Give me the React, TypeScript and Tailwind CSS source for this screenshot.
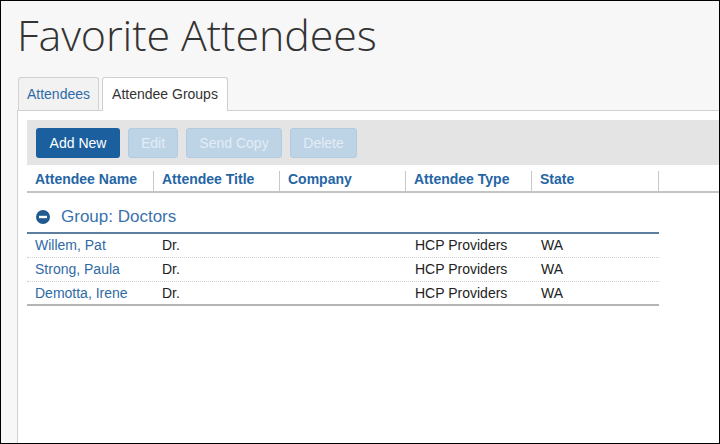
const ROWS = [
  { name: "Willem, Pat", title: "Dr.", company: "", type: "HCP Providers", state: "WA" },
  { name: "Strong, Paula", title: "Dr.", company: "", type: "HCP Providers", state: "WA" },
  { name: "Demotta, Irene", title: "Dr.", company: "", type: "HCP Providers", state: "WA" },
];

const COLUMNS = [
  { label: "Attendee Name", w: "w-[127px]" },
  { label: "Attendee Title", w: "w-[126px]" },
  { label: "Company", w: "w-[126px]" },
  { label: "Attendee Type", w: "w-[126px]" },
  { label: "State", w: "w-[127px]" },
];

export default function App() {
  return (
    <div className="w-[720px] h-[444px] border border-black bg-[#f7f7f7] overflow-hidden flex flex-col font-['Liberation_Sans',Arial,sans-serif] text-[14px]">
      {/* title */}
      <h1 className="pl-[16px] pt-[8px] h-[76px] font-['Open_Sans',sans-serif] font-light text-[43px] leading-[52px] text-[#333] tracking-[-0.1px]">
        Favorite Attendees
      </h1>

      {/* tabs */}
      <div className="flex items-end gap-[3px] pl-[17px] h-[33px]">
        <div className="h-[33px] w-[81px] flex items-center justify-center border border-b-0 border-[#d2d2d2] rounded-t-[3px] bg-[#f2f2f2] text-[#2f6aa6]">
          Attendees
        </div>
        <div className="h-[34px] -mb-px w-[126px] flex items-center justify-center border border-b-0 border-[#cfcfcf] rounded-t-[3px] bg-white text-[#333] relative z-10">
          Attendee Groups
        </div>
      </div>

      {/* panel */}
      <div className="flex-1 ml-[16px] bg-white border-t border-l border-[#d0d0d0] pt-[9px] pl-[9px] flex flex-col">
        {/* toolbar */}
        <div className="h-[45px] bg-[#e4e4e4] flex items-center gap-[8px] pl-[9px] pt-px">
          <button className="h-[30px] w-[84px] rounded-[3px] bg-[#1b5f9f] text-white">Add New</button>
          <button className="h-[30px] w-[50px] rounded-[3px] bg-[#bdd3e6] border border-[#b3cadf] text-[#e3edf5]">Edit</button>
          <button className="h-[30px] w-[96px] rounded-[3px] bg-[#bdd3e6] border border-[#b3cadf] text-[#e3edf5]">Send Copy</button>
          <button className="h-[30px] w-[67px] rounded-[3px] bg-[#bdd3e6] border border-[#b3cadf] text-[#e3edf5]">Delete</button>
        </div>

        {/* header */}
        <div className="flex h-[28px] border-b-2 border-[#c4c4c4]">
          {COLUMNS.map((c) => (
            <div key={c.label} className={`${c.w} flex`}>
              <div className="flex-1 pl-[8px] pt-[2px] flex items-center font-bold text-[#2565a5]">{c.label}</div>
              <div className="w-px mt-[6px] bg-[#c8c8c8]" />
            </div>
          ))}
        </div>

        {/* group */}
        <div className="w-[632px]">
          <div className="h-[41px] flex items-center pl-[9px] pt-[9px] border-b-2 border-[#5d7f9f]">
            <svg width="14" height="14" viewBox="0 0 14 14" className="shrink-0">
              <circle cx="7" cy="7" r="7" fill="#205a8f" />
              <rect x="3" y="5.8" width="8" height="2.4" fill="white" />
            </svg>
            <span className="ml-[11px] text-[17px] text-[#3a72ad]">Group: Doctors</span>
          </div>

          {ROWS.map((r, i) => (
            <div
              key={r.name}
              className={`flex h-[24px] items-center ${
                i === ROWS.length - 1 ? "border-b-2 border-[#b4b4b4]" : "border-b border-dotted border-[#cfcfcf]"
              }`}
            >
              <div className="w-[127px] pl-[8px] text-[#2f6aa6]">{r.name}</div>
              <div className="w-[126px] pl-[8px] text-[#222]">{r.title}</div>
              <div className="w-[126px] pl-[8px] text-[#222]">{r.company}</div>
              <div className="w-[126px] pl-[9px] text-[#222]">{r.type}</div>
              <div className="w-[127px] pl-[9px] text-[#222]">{r.state}</div>
            </div>
          ))}
        </div>
      </div>
    </div>
  );
}
